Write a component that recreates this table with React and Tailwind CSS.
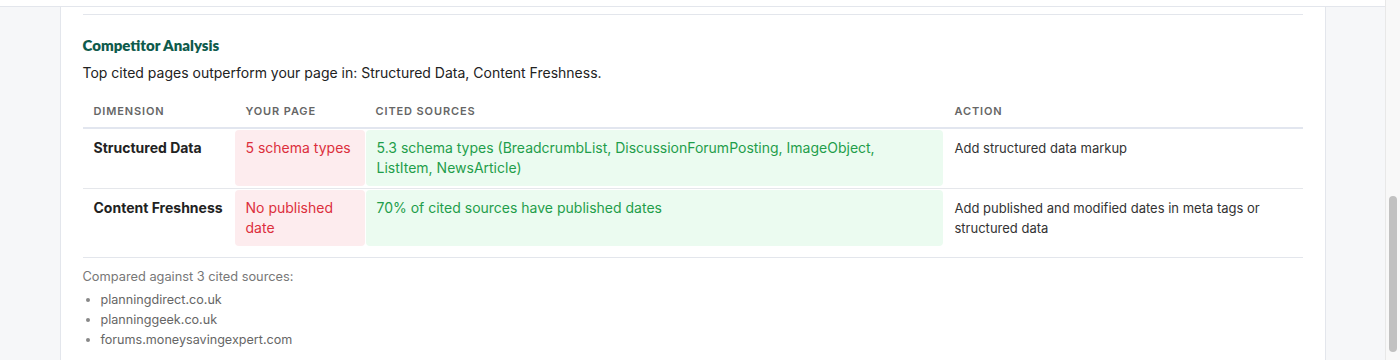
const rows = [
  {
    dimension: "Structured Data",
    yours: "5 schema types",
    cited: "5.3 schema types (BreadcrumbList, DiscussionForumPosting, ImageObject, ListItem, NewsArticle)",
    action: "Add structured data markup",
  },
  {
    dimension: "Content Freshness",
    yours: "No published date",
    cited: "70% of cited sources have published dates",
    action: "Add published and modified dates in meta tags or structured data",
  },
];

const sources = ["planningdirect.co.uk", "planninggeek.co.uk", "forums.moneysavingexpert.com"];

export default function App() {
  return (
    <div className="flex h-[360px] w-[1400px] overflow-hidden bg-[#f6f7f9] font-['Inter',sans-serif] text-[#222]">
      <div className="flex flex-1 flex-col">
        {/* tail of the section above */}
        <div className="h-[7px] border-b border-[#e3e6ec] bg-white" />

        <div className="mx-auto flex w-[1266px] flex-1 flex-col border-x border-[#e3e6ec] bg-white px-[22px]">
          <div className="border-b border-[#e3e6ec] pt-[7px]" />

          {/* Competitor Analysis */}
          <section className="pt-5">
            <h3 className="font-['Lato',sans-serif] text-[15px] font-extrabold leading-5 text-[#0f5b4c]">
              Competitor Analysis
            </h3>
            <p className="mt-2 text-[14px] leading-5 text-[#222]">
              Top cited pages outperform your page in: Structured Data, Content Freshness.
            </p>

            <div className="mt-3">
              <div className="grid grid-cols-[151px_130px_577px_1fr] gap-x-px border-b-2 border-[#e2e6ef] text-[11px] font-semibold uppercase leading-4 tracking-[0.08em] text-[#666]">
                <div className="px-[11px] py-2">Dimension</div>
                <div className="px-[11px] py-2">Your page</div>
                <div className="px-[10px] py-2">Cited sources</div>
                <div className="px-[11px] py-2">Action</div>
              </div>

              {rows.map((row, i) => (
                <div
                  key={row.dimension}
                  className={
                    "grid grid-cols-[151px_130px_577px_1fr] gap-x-px pt-px pb-[2px] text-[14px] leading-5 " +
                    (i < rows.length - 1 ? "border-b border-[#e5e7eb]" : "")
                  }
                >
                  <div className="whitespace-nowrap px-[11px] py-2 font-bold text-[#222]">{row.dimension}</div>
                  <div className="rounded-[4px] bg-[#fdecee] px-[11px] py-2 text-[#dc2f3c]">{row.yours}</div>
                  <div className="rounded-[4px] bg-[#ebfbf0] py-2 pl-[11px] pr-[14px] text-[#1f9e4b]">{row.cited}</div>
                  <div className="px-[11px] py-2 text-[13px] text-[#333]">{row.action}</div>
                </div>
              ))}
            </div>

            <div className="mt-[9px] border-t border-[#e3e6ec] pt-2.5">
              <p className="text-[12.8px] leading-[18px] text-[#777]">Compared against 3 cited sources:</p>
              <ul className="mt-1 list-disc pl-[18px] text-[12.6px] leading-5 text-[#666] marker:text-[#888]">
                {sources.map((s) => (
                  <li key={s}>{s}</li>
                ))}
              </ul>
            </div>
          </section>
        </div>
      </div>

      {/* scrollbar */}
      <div className="w-[15px] border-l border-[#e8e8e8] bg-[#f8f8f8] px-[3px] pt-[196px]">
        <div className="h-[156px] w-2 rounded-full bg-[#c1c1c1]" />
      </div>
    </div>
  );
}
